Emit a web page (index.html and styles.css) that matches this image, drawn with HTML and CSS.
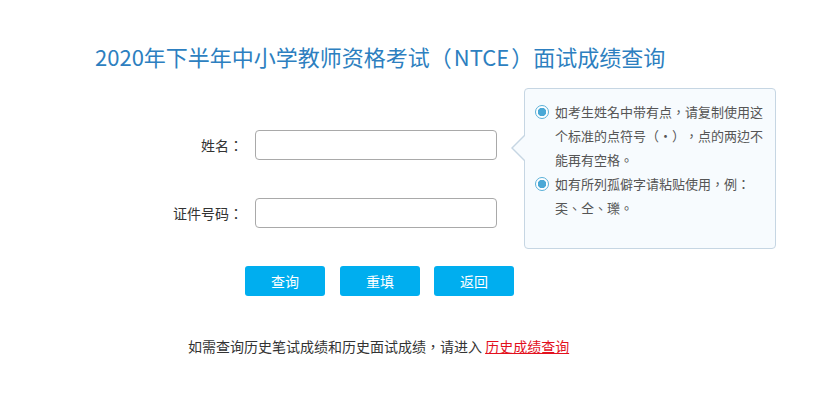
FILE: index.html
```html
<!DOCTYPE html>
<html lang="zh-CN">
<head>
  <meta charset="UTF-8" />
  <title>2020年下半年中小学教师资格考试（NTCE）面试成绩查询</title>
  <link rel="stylesheet" href="styles.css">
</head>
<body>
  <h1 class="title">2020年下半年中小学教师资格考试（<span class="abbr">NTCE</span>）面试成绩查询</h1>

  <div class="content">
    <div class="form">
      <div class="row">
        <label for="xm">姓名<span class="pn" lang="zh-TW">：</span></label>
        <input id="xm" type="text" />
      </div>
      <div class="row">
        <label for="zjhm">证件号码<span class="pn" lang="zh-TW">：</span></label>
        <input id="zjhm" type="text" />
      </div>
      <div class="buttons">
        <button class="btn">查询</button>
        <button class="btn">重填</button>
        <button class="btn">返回</button>
      </div>
    </div>

    <div class="tip">
      <div class="tip-item">
        <span class="dot"></span>
        <p class="pn" lang="zh-TW">如考生姓名中带有点，请复制使用这个标准的点符号（·），点的两边不能再有空格。</p>
      </div>
      <div class="tip-item">
        <span class="dot"></span>
        <p class="pn" lang="zh-TW">如有所列孤僻字请粘贴使用，例：<br>奀、仝、瓅。</p>
      </div>
    </div>
  </div>

  <p class="history">如需查询历史笔试成绩和历史面试成绩<span class="pn" lang="zh-TW">，</span>请进入 <a href="#">历史成绩查询</a></p>
</body>
</html>
```

FILE: styles.css
```css
body {
  margin: 0;
  background: #fff;
  color: #333;
  font-family: "Noto Sans CJK SC", "Noto Sans", sans-serif;
  text-spacing-trim: space-all;
}

/* centred full-width punctuation, as on the original page */
.pn {
  font-family: "Noto Sans CJK TC", "Noto Sans CJK SC", sans-serif;
}

.title {
  margin: 41px 0 0 95px;
  font-size: 22px;
  line-height: 30px;
  font-weight: normal;
  color: #2d7fc0;
}

.title .abbr {
  padding: 0 2px;
}

.content {
  display: flex;
  align-items: flex-start;
  margin-top: 17px;
}

.form {
  flex: none;
  width: 497px;
  padding-top: 42px;
}

.row {
  display: flex;
  align-items: center;
  margin-bottom: 38px;
}

.row label {
  width: 243px;
  margin-right: 12px;
  text-align: right;
  font-size: 14px;
  color: #333;
}

.row input {
  width: 242px;
  height: 30px;
  box-sizing: border-box;
  border: 1px solid #a9a9a9;
  border-radius: 4px;
  outline: none;
  padding: 0 6px;
  font-size: 14px;
}

.buttons {
  display: flex;
  gap: 15px;
  padding-left: 245px;
  width: 280px;
}

.btn {
  flex: none;
  width: 80px;
  height: 30px;
  border: none;
  border-radius: 3px;
  background: #00aeef;
  color: #fff;
  font-family: inherit;
  font-size: 14px;
  cursor: pointer;
}

.btn:last-child {
  margin-left: -1px;
}

.tip {
  position: relative;
  margin-left: 27px;
  width: 252px;
  height: 161px;
  box-sizing: border-box;
  padding: 11px 10px 0 10px;
  background: #f7fbfe;
  border: 1px solid #c6d6e3;
  border-radius: 4px;
}

.tip::before,
.tip::after {
  content: "";
  position: absolute;
  top: 45px;
  width: 0;
  height: 0;
  border-style: solid;
}

.tip::before {
  left: -14px;
  border-width: 14px 14px 14px 0;
  border-color: transparent #c6d6e3 transparent transparent;
}

.tip::after {
  left: -12px;
  top: 46px;
  border-width: 13px 13px 13px 0;
  border-color: transparent #f7fbfe transparent transparent;
}

.tip-item {
  display: flex;
  align-items: flex-start;
}

.tip-item p {
  margin: 0;
  flex: 1;
  font-size: 13px;
  line-height: 24px;
  color: #555;
}

.dot {
  flex: none;
  width: 12px;
  height: 12px;
  margin: 5px 6px 0 0;
  border: 1px solid #5ab0d8;
  border-radius: 50%;
  background: radial-gradient(circle, #4aa8d6 0, #4aa8d6 4px, #fff 4.5px);
}

.history {
  margin: 40px 0 0 188px;
  font-size: 14px;
  color: #333;
}

.history a {
  color: #e3101d;
  text-decoration: underline;
}
```
